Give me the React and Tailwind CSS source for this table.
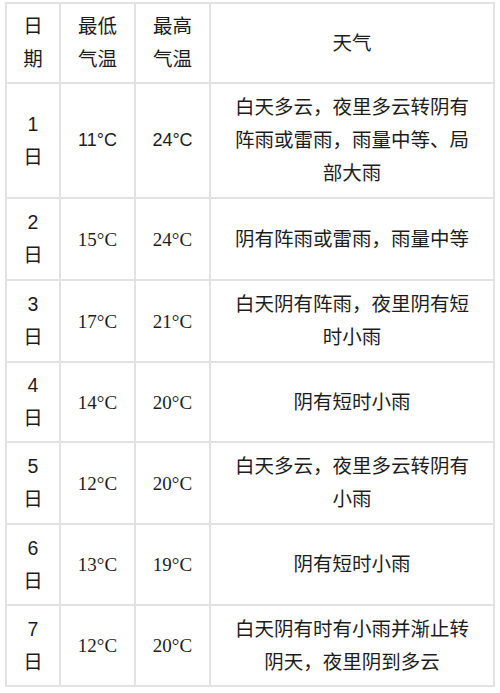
const rows = [
  { d: "1", lo: "11°C", hi: "24°C", w: "白天多云，夜里多云转阴有阵雨或雷雨，雨量中等、局部大雨", h: "h-[115px]", sans: true },
  { d: "2", lo: "15°C", hi: "24°C", w: "阴有阵雨或雷雨，雨量中等", h: "h-[82px]" },
  { d: "3", lo: "17°C", hi: "21°C", w: "白天阴有阵雨，夜里阴有短时小雨", h: "h-[82px]" },
  { d: "4", lo: "14°C", hi: "20°C", w: "阴有短时小雨", h: "h-[80px]" },
  { d: "5", lo: "12°C", hi: "20°C", w: "白天多云，夜里多云转阴有小雨", h: "h-[82px]" },
  { d: "6", lo: "13°C", hi: "19°C", w: "阴有短时小雨", h: "h-[81px]" },
  { d: "7", lo: "12°C", hi: "20°C", w: "白天阴有时有小雨并渐止转阴天，夜里阴到多云", h: "h-[81px]" },
];

const cell = "border-2 border-[#e2e2e2] text-center align-middle";

export default function App() {
  return (
    <div className="w-[500px] h-[693px] bg-white pt-[2px] pl-[5px] text-[#1c1c1c] font-['Liberation_Sans','Noto_Sans_CJK_SC',sans-serif] text-[19.5px] leading-[33px]">
      <table className="border-collapse table-fixed w-[488px]">
        <colgroup>
          <col className="w-[54px]" />
          <col className="w-[75px]" />
          <col className="w-[75px]" />
          <col className="w-[284px]" />
        </colgroup>
        <thead>
          <tr className="h-[80px]">
            <th className={`${cell} font-normal px-3`}>日期</th>
            <th className={`${cell} font-normal px-3`}>最低气温</th>
            <th className={`${cell} font-normal px-3`}>最高气温</th>
            <th className={`${cell} font-normal px-[18px]`}>天气</th>
          </tr>
        </thead>
        <tbody>
          {rows.map((r) => {
            const temp = r.sans
              ? "font-['Liberation_Sans',sans-serif] text-[18px]"
              : "font-['Liberation_Serif',serif] text-[19px]";
            return (
              <tr key={r.d} className={r.h}>
                <td className={`${cell} px-3`}>{r.d}日</td>
                <td className={`${cell} px-2 ${temp}`}>{r.lo}</td>
                <td className={`${cell} px-2 ${temp}`}>{r.hi}</td>
                <td className={`${cell} px-[18px]`}>{r.w}</td>
              </tr>
            );
          })}
        </tbody>
      </table>
    </div>
  );
}
